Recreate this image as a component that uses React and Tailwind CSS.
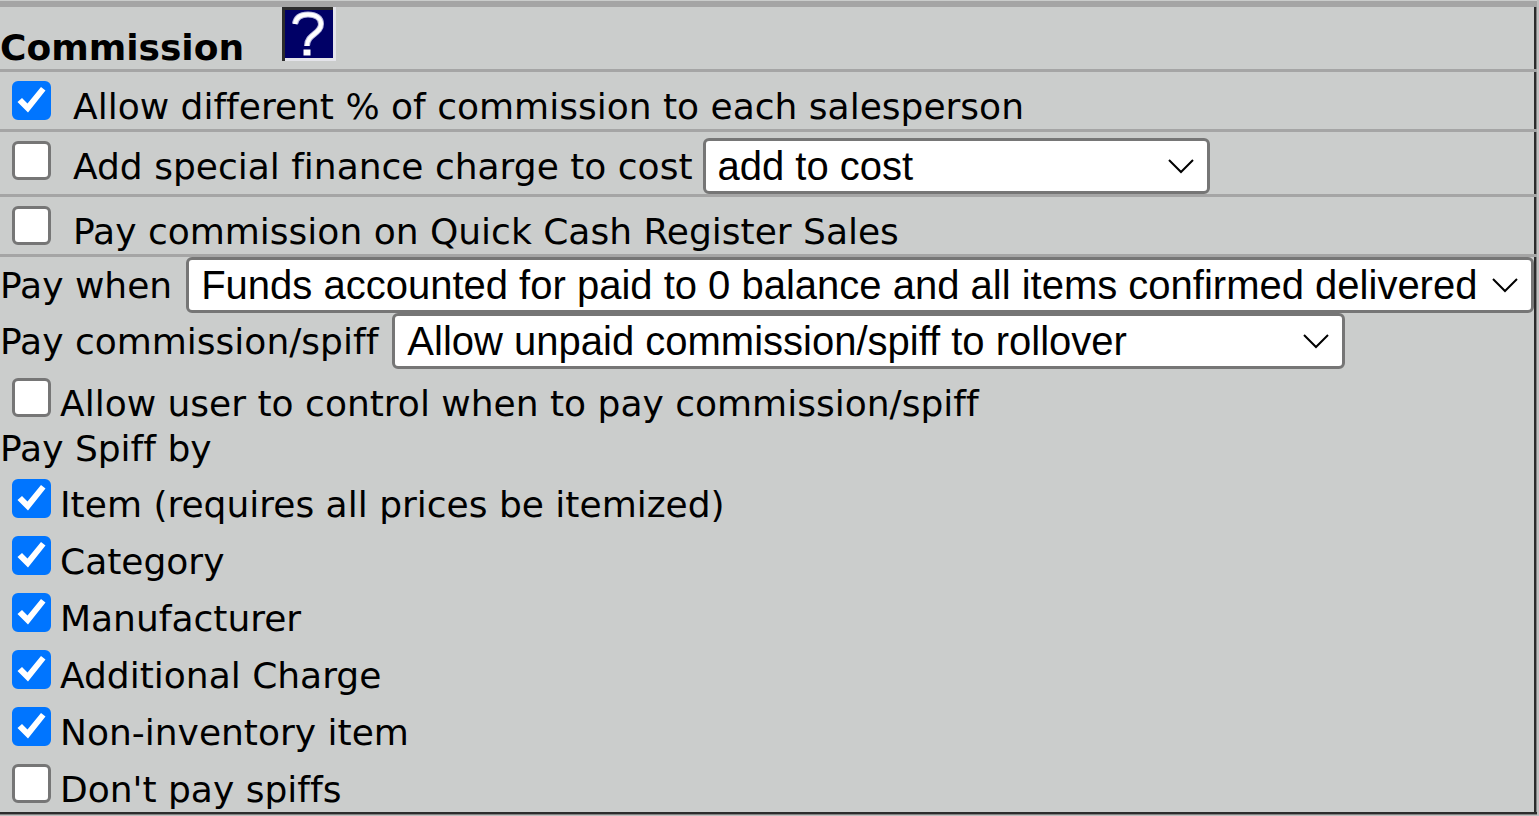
import React, { useState } from 'react';

function Checkbox({ id, checked, onChange }) {
    return (
        <span className="relative ml-3 mt-[9px] block size-[39px] shrink-0">
            <input
                type="checkbox"
                id={id}
                name={id}
                checked={checked}
                onChange={onChange}
                className="block size-full appearance-none rounded-md border-3 border-[#767676] bg-white checked:border-[#0075ff] checked:bg-[#0075ff]"
            />
            {checked && (
                <svg viewBox="0 0 39 39" className="pointer-events-none absolute inset-0 size-full" aria-hidden="true">
                    <path d="M5.5 21L10 17L15.5 22.5L29 6L33.5 9.5L16 31.5Z" fill="#fff" />
                </svg>
            )}
        </span>
    );
}

function CheckRow({ id, label, checked, onChange, wide, children }) {
    return (
        <div className="flex items-start">
            <Checkbox id={id} checked={checked} onChange={onChange} />
            <label htmlFor={id} className={wide ? 'mt-3.5 pb-px pl-[22px]' : 'mt-3.5 pb-px pl-[9px]'}>{label}</label>
            {children}
        </div>
    );
}

function Select({ id, label, options, className }) {
    return (
        <span className={'relative block ' + className}>
            <select
                id={id}
                name={id}
                aria-label={label}
                className="block h-14 w-full appearance-none rounded-md border-3 border-[#767676] bg-white pl-3 font-['Liberation_Sans',Arial,sans-serif] text-[40px] leading-[48px] text-black"
            >
                {options.map((option) => <option key={option}>{option}</option>)}
            </select>
            <svg viewBox="0 0 26 16" className="pointer-events-none absolute right-4 top-5 h-4 w-[26px]" aria-hidden="true">
                <path d="M1 2 L13 14 L25 2" fill="none" stroke="#000" strokeWidth="2" />
            </svg>
        </span>
    );
}

// Table row with the sunken dark edge on its right side
function Row({ children, last }) {
    return (
        <div className={last ? 'border-b-2 border-[#2c2c2c]' : 'border-b-3 border-[#a5a5a5]'}>
            <div className="pr-[3px] shadow-[inset_-1px_0_#808080,inset_-3px_0_#2c2c2c]">{children}</div>
        </div>
    );
}

const spiffTypes = [
    { id: 'spiffItem', label: 'Item (requires all prices be itemized)' },
    { id: 'spiffCategory', label: 'Category' },
    { id: 'spiffManufacturer', label: 'Manufacturer' },
    { id: 'spiffCharge', label: 'Additional Charge' },
    { id: 'spiffNonInventory', label: 'Non-inventory item' },
    { id: 'spiffNone', label: "Don't pay spiffs" }
];

function App() {
    const [settings, setSettings] = useState({
        allowDifferent: true,
        addFinance: false,
        quickCash: false,
        userControl: false,
        spiffItem: true,
        spiffCategory: true,
        spiffManufacturer: true,
        spiffCharge: true,
        spiffNonInventory: true,
        spiffNone: false
    });

    const handleChange = (e) => {
        const { name, checked } = e.target;
        setSettings(prev => ({
            ...prev,
            [name]: checked
        }));
    };

    return (
        <form className="bg-[#c0c0c0] pr-0.5 pb-px font-['DejaVu_Sans',Verdana,sans-serif] text-[36px] leading-[42px] whitespace-nowrap text-black [font-variant-ligatures:none]">
            <div className="border-b border-[#808080] bg-[#cbcdcc] pt-px">
                <div className="border-t-6 border-[#a5a5a5]">
                    <Row>
                        <div className="flex h-[62px] items-start">
                            <h1 className="mt-5 font-bold">Commission</h1>
                            <button type="button" aria-label="Help" className="ml-[38px] block">
                                <svg viewBox="0 0 54 54" className="block size-[54px]" aria-hidden="true">
                                    <rect width="54" height="54" fill="#e4e4ea" />
                                    <path d="M0 0H51V3H3V54H0Z" fill="#2c2c2c" />
                                    <rect x="3" y="3" width="48" height="48" fill="#000066" />
                                    <path d="M13 17C14 10 19 7.5 26 7.5C34 7.5 39 11 39 17C39 27 25 27 25 39" fill="none" stroke="#b8b8e0" strokeWidth="6" />
                                    <path d="M13 17C14 10 19 7.5 26 7.5C34 7.5 39 11 39 17C39 27 25 27 25 39" fill="none" stroke="#fff" strokeWidth="4" />
                                    <rect x="21.5" y="42.5" width="7" height="6" fill="#fff" />
                                </svg>
                            </button>
                        </div>
                    </Row>
                    <Row>
                        <CheckRow wide id="allowDifferent" label="Allow different % of commission to each salesperson" checked={settings.allowDifferent} onChange={handleChange} />
                    </Row>
                    <Row>
                        <CheckRow wide id="addFinance" label="Add special finance charge to cost" checked={settings.addFinance} onChange={handleChange}>
                            <Select id="financeMode" label="Finance charge handling" options={['add to cost']} className="ml-2.5 mt-1.5 w-[507px]" />
                        </CheckRow>
                    </Row>
                    <Row>
                        <CheckRow wide id="quickCash" label="Pay commission on Quick Cash Register Sales" checked={settings.quickCash} onChange={handleChange} />
                    </Row>
                    <Row last>
                        <div className="flex items-start">
                            <label htmlFor="payWhen" className="mt-2">Pay when</label>
                            <Select id="payWhen" label="Pay when" options={['Funds accounted for paid to 0 balance and all items confirmed delivered']} className="ml-3.5 min-w-0 flex-1" />
                        </div>
                        <div className="flex items-start">
                            <label htmlFor="payCommission" className="mt-2">Pay commission/spiff</label>
                            <Select id="payCommission" label="Pay commission/spiff" options={['Allow unpaid commission/spiff to rollover']} className="ml-3.5 w-[953px]" />
                        </div>
                        <CheckRow id="userControl" label="Allow user to control when to pay commission/spiff" checked={settings.userControl} onChange={handleChange} />
                        <fieldset>
                            <legend className="pt-0.5">Pay Spiff by</legend>
                            {spiffTypes.map((type) => (
                                <CheckRow key={type.id} id={type.id} label={type.label} checked={settings[type.id]} onChange={handleChange} />
                            ))}
                        </fieldset>
                    </Row>
                </div>
            </div>
        </form>
    );
}

export default App;
